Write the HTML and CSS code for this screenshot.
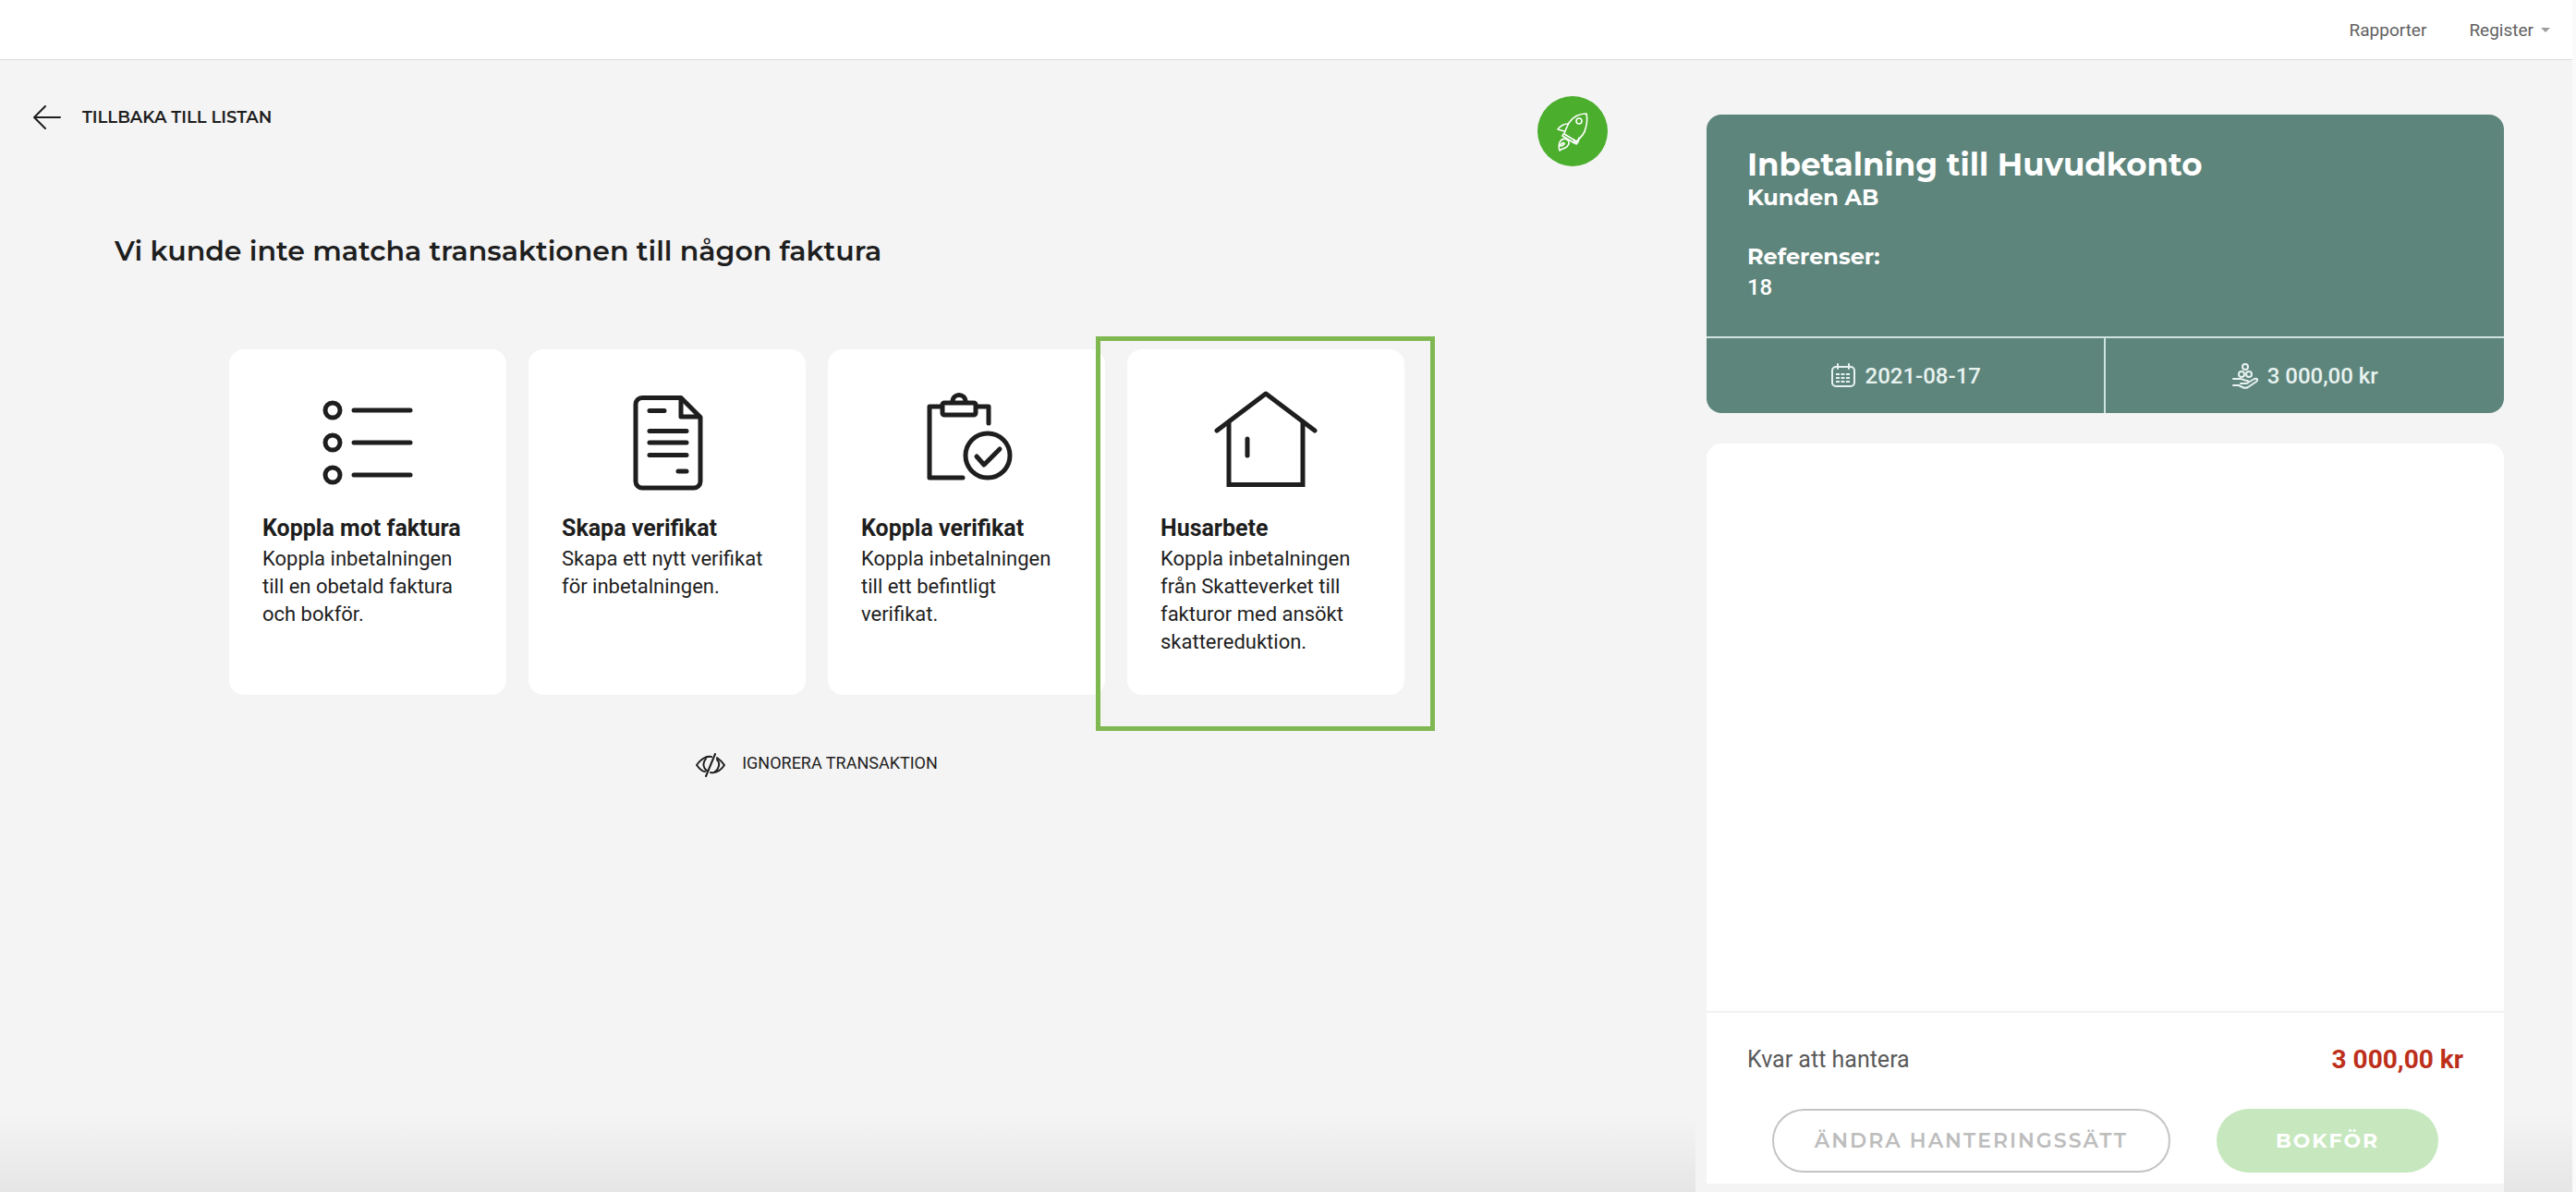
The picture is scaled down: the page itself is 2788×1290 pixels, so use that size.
FILE: index.html
```html
<!DOCTYPE html>
<html lang="sv">

<head>
  <meta charset="utf-8">
  <title>Matcha transaktion</title>
  <meta name="viewport" content="width=device-width,initial-scale=1">
  <link rel="stylesheet" href="styles.css">
</head>

<body>
  <header class="topbar">
    <nav class="topbar__nav">
      <a href="#">Rapporter</a>
      <a href="#" class="topbar__menu">Register <span class="caret"></span></a>
    </nav>
  </header>

  <div class="page">
    <main class="content">
      <div class="content__top">
        <a href="#" class="back">
          <svg width="30" height="26" viewBox="0 0 30 26" fill="none" stroke="currentColor" stroke-width="2" stroke-linecap="round" stroke-linejoin="round">
            <path d="M13 1L1 13l12 12M1 13h28"/>
          </svg>
          Tillbaka till listan
        </a>
        <button type="button" class="rocket" aria-label="Kom igång">
          <svg width="36" height="44" viewBox="0 0 36 44" fill="none" stroke="currentColor" stroke-width="1.600" stroke-linejoin="round" stroke-linecap="round">
            <path d="M33 3c-9 0-15 4-19 10-2 4-4 8-5 12l13 8c5-4 9-8 10-14 2-6 2-11 1-16z"/>
            <circle cx="25" cy="11" r="3"/>
            <path d="M13 14c-4 0-8 2-11 6l7 2M25 29c0 3-1 5-3 7l-3-5M8 25l-1 2 13 8 2-2"/>
            <path d="M13 32c-3-3-7-2-9 2-1 3-1 6 0 9 2-2 4-2 6-3 4-2 5-6 3-8zM5 37c1-3 5-3 4-1-1 1-2 2-4 2"/>
          </svg>
        </button>
      </div>

      <h1>Vi kunde inte matcha transaktionen till någon faktura</h1>

      <div class="cards">
        <button type="button" class="card">
          <svg class="card__icon" viewBox="0 0 120 110">
            <g stroke-width="5">
              <circle cx="22" cy="21" r="8"/><path d="M45 21h61"/>
              <circle cx="22" cy="56" r="8"/><path d="M45 56h61"/>
              <circle cx="22" cy="91" r="8"/><path d="M45 91h61"/>
            </g>
          </svg>
          <strong>Koppla mot faktura</strong>
          <span>Koppla inbetalningen till en obetald faktura och bokför.</span>
        </button>
        <button type="button" class="card">
          <svg class="card__icon" viewBox="0 0 120 110">
            <g stroke-width="5">
              <path d="M33 7.500h42l21 21V98a7 7 0 0 1-7 7H33a7 7 0 0 1-7-7V14.500a7 7 0 0 1 7-7"/>
              <path d="M75 8v20h20M41 21.500h16M41 43.500h40M41 56h40M41 69.500h40M72 87h9"/>
            </g>
          </svg>
          <strong>Skapa verifikat</strong>
          <span>Skapa ett nytt verifikat för inbetalningen.</span>
        </button>
        <button type="button" class="card">
          <svg class="card__icon" viewBox="0 0 120 110">
            <g stroke-width="5">
              <path d="M33 17H20v77h36M71 17h13v18"/>
              <rect x="34" y="13" width="36" height="13" rx="2"/>
              <path d="M45 12c0-10 14-10 14 0"/>
              <circle cx="83" cy="70" r="24"/>
              <path d="M71 71l8 9 17-17"/>
            </g>
          </svg>
          <strong>Koppla verifikat</strong>
          <span>Koppla inbetalningen till ett befintligt verifikat.</span>
        </button>
        <div class="highlight">
          <button type="button" class="card">
            <svg class="card__icon" viewBox="0 0 120 110">
              <g stroke-width="5">
                <path d="M7 43L60 3l53 40M40 52v18"/>
                <path d="M20 34v67.500h80V34" stroke-linejoin="miter"/>
              </g>
            </svg>
            <strong>Husarbete</strong>
            <span>Koppla inbetalningen från Skatteverket till fakturor med ansökt skattereduktion.</span>
          </button>
        </div>
      </div>

      <button type="button" class="ignore">
        <svg width="32" height="26" viewBox="0 0 32 26" fill="none" stroke="currentColor" stroke-width="2" stroke-linecap="round">
          <path d="M17 4C10 3 5 7 1 13c3 4 6 7 9 7M23 5c3 2 6 5 8 8-4 6-9 9-15 8"/>
          <path d="M11 6c-4 5-3 10 1 13M23 7c4 4 2 10-2 13M21 1L11 25"/>
        </svg>
        Ignorera transaktion
      </button>
    </main>

    <aside class="sidebar">
      <section class="payment">
        <div class="payment__info">
          <h2>Inbetalning till Huvudkonto</h2>
          <h3>Kunden AB</h3>
          <h3 class="payment__ref">Referenser:</h3>
          <p>18</p>
        </div>
        <div class="payment__facts">
          <div>
            <svg width="28" height="28" viewBox="0 0 28 28" fill="none" stroke="currentColor" stroke-width="2" stroke-linecap="round">
              <rect x="2" y="4" width="24" height="21" rx="4"/>
              <path d="M8 1v5M20 1v5"/>
              <path d="M6 12h15M6 16h15M6 20h15" stroke-dasharray="4 1.500" stroke-linecap="butt"/>
            </svg>
            2021-08-17
          </div>
          <div>
            <svg width="28" height="28" viewBox="0 0 28 28" fill="none" stroke="currentColor" stroke-width="2" stroke-linecap="round" stroke-linejoin="round">
              <circle cx="14" cy="4" r="3"/>
              <circle cx="10" cy="12" r="3"/>
              <circle cx="18" cy="12" r="3"/>
              <path d="M1 17h7c4 0 5 2 8 2 2 0 2 3-1 3H9M17 21l7-4c3-1 4 1 2 3l-9 6c-2 1-4 1-6 0l-4-2H1"/>
            </svg>
            3 000,00 kr
          </div>
        </div>
      </section>

      <section class="handle">
        <div class="handle__rows"></div>
        <div class="handle__footer">
          <div class="handle__sum">
            <span>Kvar att hantera</span>
            <strong>3 000,00 kr</strong>
          </div>
          <div class="handle__buttons">
            <button type="button" class="btn btn--outline">Ändra hanteringssätt</button>
            <button type="button" class="btn btn--primary">Bokför</button>
          </div>
        </div>
      </section>
    </aside>
  </div>
</body>

</html>
```

FILE: styles.css
```css
* {
  box-sizing: border-box;
}

body {
  display: flex;
  flex-direction: column;
  min-height: 100vh;
  margin: 0;
  background: #f4f4f4;
  border-right: 4px solid #fafafa;
  color: #1e1e1e;
  font-family: Roboto, sans-serif;
  font-size: 20px;
}

a {
  color: inherit;
  text-decoration: none;
}

button {
  border: none;
  background: none;
  padding: 0;
  color: inherit;
  font-family: inherit;
  cursor: pointer;
}

h1,
h2,
h3,
p {
  margin: 0;
}

/* Top bar */

.topbar {
  height: 65px;
  background: #fff;
  border-bottom: 1px solid #dcdcdc;
  box-shadow: 0 1px 4px rgba(0, 0, 0, .08);
}

.topbar__nav {
  display: flex;
  justify-content: flex-end;
  align-items: center;
  gap: 46px;
  height: 64px;
  padding-right: 24px;
  color: #616161;
  font-size: 19px;
}

.topbar__menu {
  display: flex;
  align-items: center;
  gap: 8px;
}

.caret {
  border: 5px solid transparent;
  border-top-color: #9e9e9e;
  border-bottom: none;
}

/* Layout */

.page {
  flex: 1;
  display: flex;
  background: linear-gradient(to top, #e6e6e6, #f4f4f4 84px);
}

.content {
  flex: 1;
  padding: 39px 0 0 28px;
}

.sidebar {
  display: flex;
  flex-direction: column;
  width: calc(31% + 12px);
  margin: 0 74px 0 95px;
  padding: 59px 0 9px 12px;
  background: #f4f4f4;
}

.content__top {
  display: flex;
  justify-content: space-between;
  align-items: flex-start;
}

.back {
  display: flex;
  align-items: center;
  gap: 23px;
  padding: 10px 0 0 8px;
  font-family: Montserrat, Inter, sans-serif;
  font-size: 18px;
  font-weight: 600;
  text-transform: uppercase;
}

.rocket {
  display: flex;
  align-items: center;
  justify-content: center;
  width: 76px;
  height: 76px;
  border-radius: 50%;
  background: #4bae2d;
  color: #fff;
}

h1 {
  margin: 70px 0 0 96px;
  font-family: Montserrat, Inter, sans-serif;
  font-size: 30px;
  font-weight: 600;
  line-height: 44px;
}

/* Choices */

.cards {
  display: flex;
  justify-content: center;
  gap: 24px;
  margin-top: 84px;
}

.card {
  display: flex;
  flex-direction: column;
  width: 300px;
  height: 374px;
  padding: 45px 36px 36px;
  border-radius: 16px;
  background: #fff;
  font-size: 22px;
  line-height: 30px;
  text-align: left;
}

.card strong {
  font-size: 25px;
  line-height: 36px;
}

.card__icon {
  align-self: center;
  width: 120px;
  height: 110px;
  margin-bottom: 21px;
  fill: none;
  stroke: #1e1e1e;
  stroke-linecap: round;
  stroke-linejoin: round;
}

.highlight {
  position: relative;
}

.highlight::after {
  content: "";
  position: absolute;
  top: -14px;
  right: -33px;
  bottom: -39px;
  left: -34px;
  border: 5px solid #7fb850;
  pointer-events: none;
}

.ignore {
  display: flex;
  align-items: center;
  gap: 18px;
  margin: 59px auto 0;
  font-size: 18px;
  line-height: 30px;
  text-transform: uppercase;
}

.ignore svg {
  margin-top: 4px;
}

/* Payment */

.payment {
  border-radius: 16px;
  background: #5e857c;
  color: #fff;
}

.payment__info {
  padding: 34px 44px 36px;
}

h2 {
  font-family: Montserrat, Inter, sans-serif;
  font-size: 34px;
  line-height: 40px;
}

h3 {
  font-family: Montserrat, Inter, sans-serif;
  font-size: 24px;
  line-height: 32px;
}

.payment__ref {
  margin-top: 32px;
}

.payment p {
  font-size: 24px;
  font-weight: 500;
  line-height: 34px;
}

.payment__facts {
  display: flex;
  border-top: 2px solid #cfe3de;
}

.payment__facts div {
  flex: 1;
  display: flex;
  align-items: center;
  justify-content: center;
  gap: 10px;
  height: 81px;
  color: #e8f3f0;
  font-size: 24px;
  font-weight: 500;
}

.payment__facts div + div {
  border-left: 2px solid #cfe3de;
}

/* Remaining amount */

.handle {
  flex: 1;
  display: flex;
  flex-direction: column;
  margin-top: 33px;
  border-radius: 16px 16px 0 0;
  background: #fff;
}

.handle__rows {
  flex: 1;
}

.handle__footer {
  padding: 34px 44px 12px;
  border-top: 2px solid #f1f1f1;
}

.handle__sum {
  display: flex;
  justify-content: space-between;
  align-items: center;
  color: #5a5a5a;
  font-size: 25px;
  line-height: 34px;
}

.handle__sum strong {
  color: #bd2f1b;
  font-size: 28px;
}

.handle__buttons {
  display: flex;
  justify-content: center;
  gap: 50px;
  margin-top: 36px;
}

.btn {
  height: 69px;
  border-radius: 35px;
  font-family: Montserrat, Inter, sans-serif;
  font-size: 22px;
  letter-spacing: 2px;
  text-transform: uppercase;
}

.btn--outline {
  padding: 0 44px;
  border: 2px solid #c4c4c4;
  color: #bdbdbd;
  font-weight: 600;
}

.btn--primary {
  padding: 0 64px;
  background: #c7e8bf;
  color: #fff;
  font-weight: 700;
}
```
